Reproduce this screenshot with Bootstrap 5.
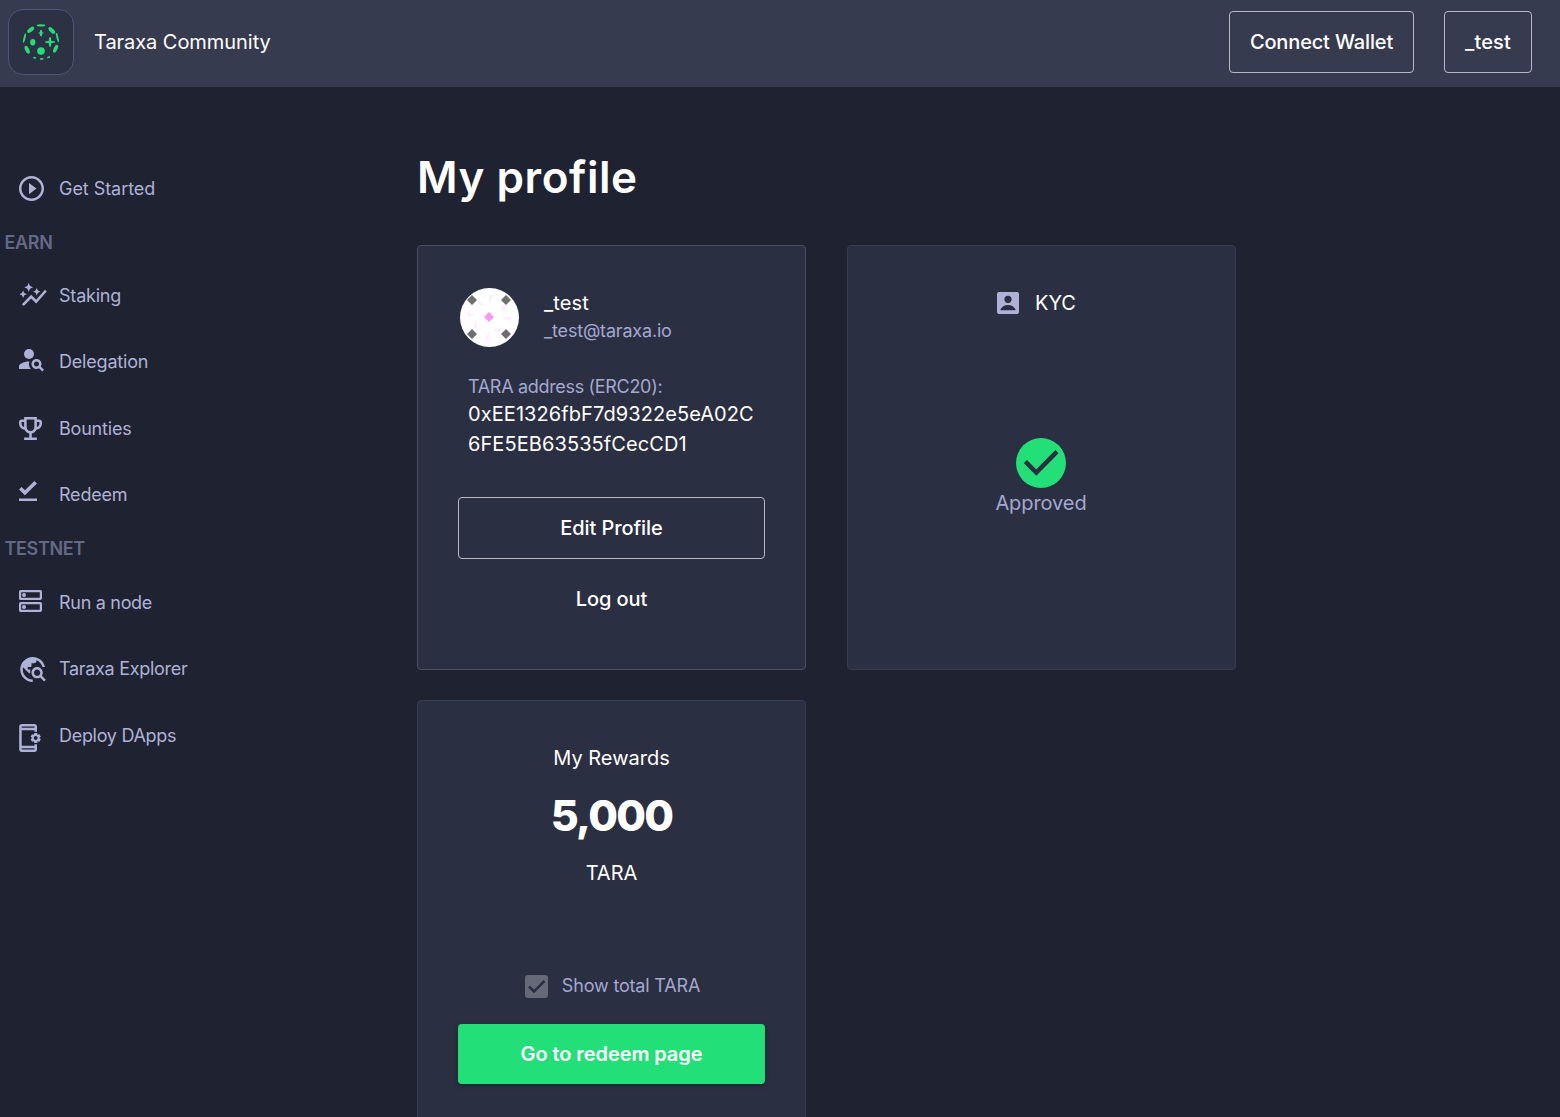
<!DOCTYPE html>
<html lang="en">
<head>
<meta charset="utf-8">
<meta name="viewport" content="width=device-width, initial-scale=1">
<title>Taraxa Community</title>
<link href="https://cdn.jsdelivr.net/npm/bootstrap@5.3.0/dist/css/bootstrap.min.css" rel="stylesheet">
<style>
  html, body { height: 100%; overflow: hidden; }
  body { background: #1f2230; color: #fff; font-family: Inter, "Liberation Sans", sans-serif; font-size: 20px; line-height: 30px; }
  .topbar { height: 87px; background: #373b50; padding: 0 28px 3px 8px; }
  .logo-box { width: 66px; height: 66px; border: 1px solid #50557a; border-radius: 15px; background: #2c3144; padding-right: 1px; color: #22df77; }
  .brand-name { margin-left: 20px; letter-spacing: -.05px; }
  .top-actions { gap: 30px; }
  .btn-line { height: 62px; border: 1px solid #b7b9c4; border-radius: 4px; color: #fff; font-size: 20px; font-weight: 500; padding: 0 20px; letter-spacing: -.08px; }
  .btn-line:hover { color: #fff; border-color: #fff; }
  .btn-wallet { letter-spacing: -.15px; }
  .btn-user { letter-spacing: .15px; }
  .sidebar { width: 417px; padding-top: 68.4px; font-size: 18px; color: #aeb2d6; letter-spacing: -.2px; }
  .side-item { height: 66.4px; padding-left: 19px; color: inherit; text-decoration: none; }
  .side-icon { width: 40px; flex: none; }
  .side-icon svg, .logo-box svg, .kyc-head svg { display: block; fill: currentColor; overflow: visible; }
  .side-head { height: 41.1px; padding: 1px 0 0 4.500px; font-weight: 600; color: #646987; letter-spacing: -.35px; }
  .ls-0 { letter-spacing: -.05px; }
  .ls-wide { letter-spacing: -.3px; }
  .page-title { font-size: 44px; font-weight: 600; line-height: 60px; margin: 60px 0 38px; letter-spacing: .55px; }
  .tiles { display: grid; grid-template-columns: 389px 389px; column-gap: 41px; row-gap: 30px; }
  .tile { height: 425px; background: #2b2f42; border: 1px solid #373b51; border-radius: 4px; padding: 42px 40px 0; }
  .tile-profile { border-color: #4b4e61; }
  .tile-rewards { height: 456px; }
  .muted-text { color: #a3a8d0; font-size: 18px; letter-spacing: -.18px; }
  .profile-row { height: 59px; margin-left: 2px; gap: 25px; }
  .profile-id { line-height: 28px; padding-bottom: 2px; }
  .profile-name { letter-spacing: .15px; }
  .address { padding-left: 10px; margin-top: 27px; height: 85px; letter-spacing: .08px; }
  .address-label { line-height: 25px; letter-spacing: -.32px; }
  .btn-edit { margin-top: 38px; }
  .btn-plain { height: 62px; margin-top: 9px; color: #fff; font-size: 20px; font-weight: 500; border: 0; letter-spacing: -.08px; }
  .btn-plain:hover { color: #fff; }
  .kyc-head { gap: 16px; margin-right: 10px; }
  .kyc-head svg { color: #aeb2d6; }
  .kyc-check { margin: 120px 1px 0 0; }
  .kyc-status { color: #a3a8d0; letter-spacing: -.08px; margin-right: 1px; }
  .total { font-size: 43px; font-weight: 800; line-height: 60px; margin-top: 12px; letter-spacing: -1.7px; }
  .unit { margin-top: 13px; }
  .show-total { margin-top: 83px; gap: 14px; height: 30px; padding-left: 2px; }
  .show-total svg { margin-top: 1px; }
  .btn-go { height: 60px; margin-top: 23px; background: #22df77; color: #fff; font-size: 20px; font-weight: 600; border: 0; border-radius: 4px; box-shadow: 0 2px 4px rgba(0,0,0,.3); letter-spacing: -.08px; }
  .btn-go:hover { background: #1fcf6e; color: #fff; }
</style>
</head>
<body>
<header class="topbar d-flex align-items-center">
  <div class="logo-box d-flex align-items-center justify-content-center">
    <svg width="36" height="36" viewBox="0 0 36 36">
      <ellipse cx="18" cy="1.4" rx="4.2" ry="1.1"/>
      <ellipse cx="7.7" cy="5.8" rx="4.1" ry="2" transform="rotate(-40 7.700 5.800)"/>
      <ellipse cx="28.8" cy="6.4" rx="4.2" ry="2" transform="rotate(42 28.800 6.400)"/>
      <ellipse cx="1.500" cy="14" rx="1" ry="4.800" transform="rotate(14 1.500 14)"/>
      <ellipse cx="34.400" cy="13.500" rx="1" ry="4.800" transform="rotate(-14 34.400 13.500)"/>
      <ellipse cx="4.200" cy="25.800" rx="2" ry="4.300" transform="rotate(-26 4.200 25.800)"/>
      <ellipse cx="32.600" cy="24.800" rx="1.900" ry="4.200" transform="rotate(24 32.600 24.800)"/>
      <ellipse cx="9.800" cy="18.200" rx="2.600" ry="3.200"/>
      <circle cx="18" cy="27" r="3.800"/>
      <path d="M17.200 6h1.600l.6 2.400 2.100.6-2.100.6-.6 2.600h-1.600l-.6-2.600-2.100-.6 2.100-.6zM26.200 13.300h1.600l.5 3.600 3.500.4v1.400l-3.500.4-.5 3.600h-1.600l-.5-3.600-3.500-.4v-1.400l3.500-.4z"/>
      <ellipse cx="11.700" cy="33.800" rx="1.600" ry=".9" transform="rotate(20 11.700 33.800)"/>
      <ellipse cx="18.700" cy="34.900" rx="1.900" ry=".9"/>
      <ellipse cx="25.600" cy="33.200" rx="1.700" ry=".9" transform="rotate(-25 25.600 33.200)"/>
    </svg>
  </div>
  <span class="brand-name">Taraxa Community</span>
  <div class="top-actions ms-auto d-flex">
    <button class="btn btn-line btn-wallet">Connect Wallet</button>
    <button class="btn btn-line btn-user">_test</button>
  </div>
</header>

<div class="d-flex">
  <nav class="sidebar flex-shrink-0 d-flex flex-column">
    <a href="#" class="side-item d-flex align-items-center"><span class="side-icon"><svg width="25" height="25" viewBox="2 2 20 20"><path d="M10 16.500l6-4.500-6-4.500v9zM12 2C6.480 2 2 6.480 2 12s4.480 10 10 10 10-4.480 10-10S17.520 2 12 2zm0 18c-4.410 0-8-3.590-8-8s3.590-8 8-8 8 3.590 8 8-3.590 8-8 8z"/></svg></span><span class="ls-0">Get Started</span></a>
    <div class="side-head d-flex align-items-center">EARN</div>
    <a href="#" class="side-item d-flex align-items-center"><span class="side-icon mb-1"><svg width="28" height="23" viewBox="0.700 2 22.500 18.500"><path d="M14.060 9.940 12 9l2.060-.94L15 6l.94 2.060L18 9l-2.060.94L15 12l-.94-2.060zM4 14l.94-2.060L7 11l-2.060-.94L4 8l-.94 2.060L1 11l2.060.94L4 14zm4.500-5 1.090-2.410L12 5.500 9.590 4.410 8.500 2 7.410 4.410 5 5.500l2.410 1.090L8.500 9zm-4 11.500 6-6.010 4 4L23 8.930l-1.410-1.410-7.090 7.970-4-4L3 19l1.500 1.500z"/></svg></span><span>Staking</span></a>
    <a href="#" class="side-item d-flex align-items-center"><span class="side-icon mb-1"><svg width="25" height="22.500" viewBox="2 4 20 18"><circle cx="10" cy="8" r="4"/><path d="M10.350 14.010C7.620 13.910 2 15.270 2 18v2h9.540c-2.470-2.760-1.230-5.890-1.190-5.990zM19.430 18.020c.36-.59.57-1.280.57-2.020 0-2.210-1.790-4-4-4s-4 1.790-4 4 1.790 4 4 4c.74 0 1.430-.22 2.020-.57L20.590 22 22 20.590l-2.570-2.570zM16 18c-1.100 0-2-.9-2-2s.9-2 2-2 2 .9 2 2-.9 2-2 2z"/></svg></span><span>Delegation</span></a>
    <a href="#" class="side-item d-flex align-items-center"><span class="side-icon"><svg width="23" height="23" viewBox="3 3 18 18"><path d="M19 5h-2V3H7v2H5c-1.100 0-2 .9-2 2v1c0 2.550 1.920 4.630 4.390 4.940.63 1.500 1.980 2.630 3.610 2.960V19H7v2h10v-2h-4v-3.100c1.630-.33 2.980-1.460 3.610-2.960C19.080 12.630 21 10.550 21 8V7c0-1.100-.9-2-2-2zM5 8V7h2v3.820C5.840 10.400 5 9.300 5 8zm7 6c-1.650 0-3-1.350-3-3V5h6v6c0 1.650-1.350 3-3 3zm7-6c0 1.300-.84 2.400-2 2.820V7h2v1z"/></svg></span><span>Bounties</span></a>
    <a href="#" class="side-item d-flex align-items-center"><span class="side-icon mb-1 pb-1"><svg width="18" height="20" viewBox="5 4 14 16" preserveAspectRatio="none"><path d="M5 18h14v2H5v-2zm4.600-2.700L5 10.700l2-1.900 2.600 2.600L17 4l2 2-9.400 9.300z"/></svg></span><span>Redeem</span></a>
    <div class="side-head d-flex align-items-center">TESTNET</div>
    <a href="#" class="side-item d-flex align-items-center"><span class="side-icon mb-1"><svg width="23" height="22" viewBox="0 0 23 22"><g fill="none" stroke="currentColor" stroke-width="2.200"><rect x="1.100" y="1.100" width="20.800" height="7.800" rx=".6"/><rect x="1.100" y="13.100" width="20.800" height="7.800" rx=".6"/></g><circle cx="5" cy="5" r="2"/><circle cx="5" cy="17" r="2"/></svg></span><span class="ls-wide">Run a node</span></a>
    <a href="#" class="side-item d-flex align-items-center"><span class="side-icon"><svg width="26.900" height="25" viewBox="1 2 21.500 20"><path d="M19.300 16.900c.4-.7.7-1.500.7-2.400 0-2.500-2-4.500-4.500-4.500S11 12 11 14.500s2 4.500 4.500 4.500c.9 0 1.700-.3 2.400-.7l3.200 3.200 1.400-1.400-3.200-3.200zm-3.800.1c-1.400 0-2.500-1.100-2.500-2.500s1.100-2.500 2.500-2.500 2.500 1.100 2.500 2.500-1.100 2.500-2.500 2.500zM12 20v2C6.480 22 2 17.520 2 12S6.480 2 12 2c4.840 0 8.870 3.440 9.800 8h-2.070c-.64-2.460-2.400-4.470-4.730-5.410V5c0 1.100-.9 2-2 2h-2v2c0 .55-.45 1-1 1H8v2h2v3H9l-4.790-4.790C4.080 10.790 4 11.380 4 12c0 4.410 3.590 8 8 8z"/></svg></span><span class="ls-wide">Taraxa Explorer</span></a>
    <a href="#" class="side-item d-flex align-items-center"><span class="side-icon mt-1"><svg width="22" height="28" viewBox="5 1 17 22"><path d="M21.810 12.740l-.82-.63v-.22l.8-.63c.16-.12.2-.34.1-.51l-.85-1.480c-.07-.13-.21-.2-.35-.2-.05 0-.1.01-.15.03l-.95.38c-.08-.05-.11-.07-.19-.11l-.15-1.010c-.03-.21-.2-.36-.4-.36h-1.710c-.2 0-.37.15-.4.34l-.14 1.010c-.03.02-.07.03-.1.05l-.09.06-.95-.38c-.05-.02-.1-.03-.15-.03-.14 0-.27.07-.35.2l-.85 1.480c-.1.17-.06.39.1.51l.8.63v.23l-.8.63c-.16.12-.2.34-.1.51l.85 1.480c.07.13.21.2.35.2.05 0 .1-.01.15-.03l.95-.37c.08.05.12.07.2.11l.15 1.010c.03.2.2.34.4.34h1.710c.2 0 .37-.15.4-.34l.15-1.010c.03-.02.07-.03.1-.05l.09-.06.95.38c.05.02.1.03.15.03.14 0 .27-.07.35-.2l.85-1.480c.1-.17.06-.39-.1-.51zM18 13.500c-.83 0-1.500-.67-1.500-1.500s.67-1.500 1.500-1.500 1.500.67 1.500 1.500-.67 1.500-1.500 1.500zM17 18H7V6h10v1h2V3c0-1.100-.9-2-2-2H7c-1.100 0-2 .9-2 2v18c0 1.100.9 2 2 2h10c1.100 0 2-.9 2-2v-4h-2v1zM7 3h10v1H7V3zm10 18H7v-1h10v1z"/></svg></span><span class="ls-wide">Deploy DApps</span></a>
  </nav>

  <main>
    <h1 class="page-title">My profile</h1>
    <div class="tiles">
      <section class="tile tile-profile">
        <div class="profile-row d-flex align-items-center">
          <svg width="59" height="59" viewBox="0 0 59 59">
            <circle cx="29.500" cy="29.500" r="29.500" fill="#fff"/>
            <path fill="#fdeffd" d="M29 7h5l-5 9zM17.500 13l8 4h-8zM7 23.500l9 4.500H7zM42 17l4.500 2-4.500 7zM51 33.500V29h-9zM17 32v9l-4-2zM29 43v9h-5zM32 41h8v4.500z"/>
            <path fill="#6f6f6f" d="M12 7l5 5-5 5-5-5zM46 7l5 5-5 5-5-5zM12 41l5 5-5 5-5-5zM46 41l5 5-5 5-5-5z"/>
            <path fill="#fd96f5" d="M29 24l5 5-5 5-5-5z"/>
          </svg>
          <div class="profile-id">
            <div class="profile-name">_test</div>
            <div class="muted-text">_test@taraxa.io</div>
          </div>
        </div>
        <div class="address">
          <div class="muted-text address-label">TARA address (ERC20):</div>
          <div>0xEE1326fbF7d9322e5eA02C<br>6FE5EB63535fCecCD1</div>
        </div>
        <button class="btn btn-line btn-edit w-100">Edit Profile</button>
        <button class="btn btn-plain w-100">Log out</button>
      </section>

      <section class="tile d-flex flex-column align-items-center">
        <div class="kyc-head d-flex align-items-center">
          <svg width="22" height="22" viewBox="0 0 22 22"><path fill-rule="evenodd" d="M2 0h18a2 2 0 0 1 2 2v18a2 2 0 0 1-2 2H2a2 2 0 0 1-2-2V2a2 2 0 0 1 2-2zM11 3.700a3.600 3.600 0 1 0 0 7.200a3.600 3.600 0 1 0 0-7.200zM3.500 18.300h15v-1C17 14.600 14 13.100 11 13.100S5 14.600 3.500 17.300z"/></svg>
          <span>KYC</span>
        </div>
        <svg class="kyc-check" width="50" height="50" viewBox="0 0 50 50"><circle cx="25" cy="25" r="25" fill="#22df77"/><path d="M9.400 23.500L20.300 34.600 41 13.600" fill="none" stroke="#2b2f42" stroke-width="4.500"/></svg>
        <div class="kyc-status">Approved</div>
      </section>

      <section class="tile tile-rewards text-center">
        <div>My Rewards</div>
        <div class="total">5,000</div>
        <div class="unit">TARA</div>
        <div class="show-total d-flex align-items-center justify-content-center">
          <svg width="23" height="23" viewBox="0 0 23 23"><rect width="23" height="23" rx="3" fill="#666977"/><path d="M4 11.500l5 5L19.500 6" fill="none" stroke="#2b2f42" stroke-width="2.500"/></svg>
          <span class="muted-text">Show total TARA</span>
        </div>
        <button class="btn btn-go w-100">Go to redeem page</button>
      </section>
    </div>
  </main>
</div>
<script src="https://cdn.jsdelivr.net/npm/bootstrap@5.3.0/dist/js/bootstrap.bundle.min.js"></script>
</body>
</html>
